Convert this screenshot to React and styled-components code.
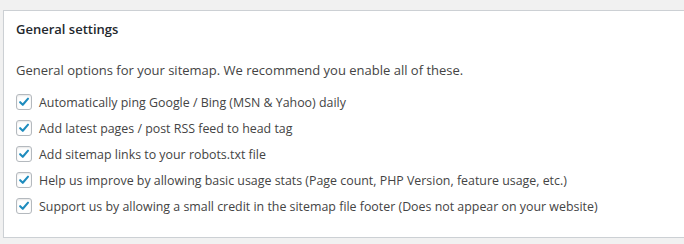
import React from "react";
import styled, { createGlobalStyle } from "styled-components";

const GlobalStyle = createGlobalStyle`
  html, body {
    margin: 0;
    padding: 0;
    background: #f1f1f1;
  }
  body {
    font-family: "Open Sans", "Noto Sans", sans-serif;
    color: #444;
    font-size: 13px;
  }
`;

const Wrap = styled.div`
  padding: 10px 0 0 3px;
`;

const Postbox = styled.div`
  background: #fff;
  border: 1px solid #ccd0d4;
  border-right: none;
  box-shadow: 0 1px 1px rgba(0, 0, 0, 0.04);
  padding: 0 12px 21px;
  height: 228px;
  box-sizing: border-box;
`;

const Title = styled.h3`
  margin: 0;
  padding: 8px 0 0;
  font-size: 13px;
  font-weight: 600;
  line-height: 20px;
  color: #23282d;
`;

const Intro = styled.p`
  margin: 21px 0 9px;
  line-height: 20px;
`;

const List = styled.ul`
  list-style: none;
  margin: 0;
  padding: 0;
`;

const Row = styled.li`
  display: flex;
  align-items: center;
  height: 26px;
`;

const Label = styled.label`
  display: flex;
  align-items: center;
  gap: 7px;
  font-size: 12.4px;
  cursor: pointer;
`;

const Box = styled.span`
  width: 16px;
  height: 16px;
  box-sizing: border-box;
  border: 1px solid #b4b9be;
  border-radius: 3px;
  background: #fff;
  box-shadow: inset 0 1px 2px rgba(0, 0, 0, 0.1);
  display: flex;
  align-items: center;
  justify-content: center;
  flex-shrink: 0;
`;

const Check = () => (
  <svg width="16" height="16" viewBox="0 0 16 16">
    <path
      d="M3.6 8.2 L6.6 11.2 L12.6 4.2"
      fill="none"
      stroke="#1e8cbe"
      strokeWidth="2.4"
      strokeLinecap="round"
      strokeLinejoin="round"
    />
  </svg>
);

const options = [
  "Automatically ping Google / Bing (MSN & Yahoo) daily",
  "Add latest pages / post RSS feed to head tag",
  "Add sitemap links to your robots.txt file",
  "Help us improve by allowing basic usage stats (Page count, PHP Version, feature usage, etc.)",
  "Support us by allowing a small credit in the sitemap file footer (Does not appear on your website)",
];

export default function App() {
  return (
    <>
      <GlobalStyle />
      <Wrap>
        <Postbox>
          <Title>General settings</Title>
          <Intro>General options for your sitemap. We recommend you enable all of these.</Intro>
          <List>
            {options.map((text) => (
              <Row key={text}>
                <Label>
                  <Box>
                    <Check />
                  </Box>
                  {text}
                </Label>
              </Row>
            ))}
          </List>
        </Postbox>
      </Wrap>
    </>
  );
}
